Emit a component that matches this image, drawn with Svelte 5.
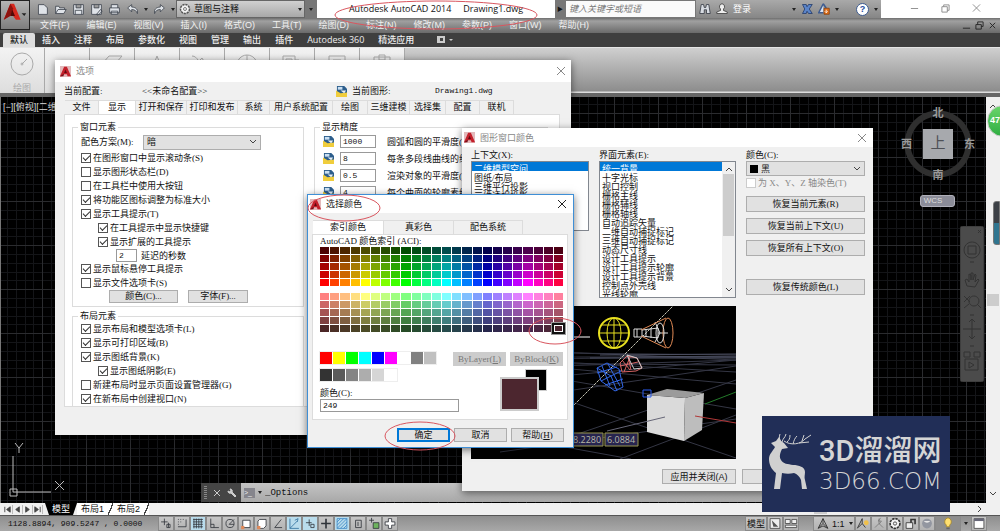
<script>
	const menus = ['文件(F)', '编辑(E)', '视图(V)', '插入(I)', '格式(O)', '工具(T)', '绘图(D)', '标注(N)', '修改(M)', '参数(P)', '窗口(W)', '帮助(H)'];
	const ribbonTabs = ['默认', '插入', '注释', '布局', '参数化', '视图', '管理', '输出', '插件', 'Autodesk 360', '精选应用'];

	// ribbon panels, 24x24 glyphs
	const panels = [
		'',
		'M2 12l7-8h13l-7 8zM2 16h13l7-8M2 20h13l7-8',
		'M5 22L12 4l7 18M8 16h8',
		'M2 4c6 0 6 8 12 8s6-4 9-2M4 14l8-8 6 10',
		'M12 3a10 10 0 1 0 .1 0M12 3v20M2 13h20',
		'M3 4h12v14H3zM6 7h6v8H6zM15 8h4v8',
		'M4 4h16v18H4zM8 8h8v10H8zM4 12h16',
		'M4 5h16v18H4zM9 3h6v5H9z'
	];

	// quick access toolbar, 16x16 glyphs
	const quick = [
		'M3 2h7l4 4v8H3z',
		'M2 13V4h4l1 2h6v2M2 13l3-5h10l-3 5z',
		'M2 2h12v12H2zM5 2v4h6V2M4 14V9h8v5',
		'M2 2h12v12H2zM5 2v4h6V2M8 14l5-6 2 2-5 5z',
		'M4 6V2h8v4M2 6h12v6H2zM4 10h8v4H4z',
		'M2 6l5-4v3c5 0 8 3 7 8-1-3-3-5-7-5v3z',
		'M14 6L9 2v3c-5 0-8 3-7 8 1-3 3-5 7-5v3z'
	];

	const tabs = ['文件', '显示', '打开和保存', '打印和发布', '系统', '用户系统配置', '绘图', '三维建模', '选择集', '配置', '联机'];

	const windowItems = [
		{ text: '在图形窗口中显示滚动条(S)', on: true },
		{ text: '显示图形状态栏(D)', on: false },
		{ text: '在工具栏中使用大按钮', on: false },
		{ text: '将功能区图标调整为标准大小', on: true },
		{ text: '显示工具提示(T)', on: true },
		{ text: '在工具提示中显示快捷键', on: true, sub: true },
		{ text: '显示扩展的工具提示', on: true, sub: true }
	];
	const windowItems2 = [
		{ text: '显示鼠标悬停工具提示', on: true },
		{ text: '显示文件选项卡(S)', on: false }
	];
	const layoutItems = [
		{ text: '显示布局和模型选项卡(L)', on: true },
		{ text: '显示可打印区域(B)', on: true },
		{ text: '显示图纸背景(K)', on: true },
		{ text: '显示图纸阴影(E)', on: true, sub: true },
		{ text: '新建布局时显示页面设置管理器(G)', on: false },
		{ text: '在新布局中创建视口(N)', on: true }
	];
	const precision = [
		['1000', '圆弧和圆的平滑度(A)'],
		['8', '每条多段线曲线的线段数(V)'],
		['0.5', '渲染对象的平滑度(J)'],
		['4', '每个曲面的轮廓素线(O)']
	];

	const contexts = ['二维模型空间', '图纸/布局', '三维平行投影', '三维透视投影'];
	const elements = ['统一背景', '十字光标', '视口控制', '栅格主线', '栅格辅线', '栅格轴线', '自动追踪矢量', '二维自动捕捉标记', '三维自动捕捉标记', '动态尺寸线', '设计工具提示', '设计工具提示轮廓', '设计工具提示背景', '控制点外壳线', '光线轮廓'];
	const restore = ['恢复当前元素(R)', '恢复当前上下文(U)', '恢复所有上下文(O)', '恢复传统颜色(L)'];

	// ACI palette: 24 hues in steps of 15 degrees, five levels each
	const levels = [76, 127, 165, 204, 255];

	function aci(hue, level, pale) {
		const channel = (shift) => {
			const k = (shift + hue / 60) % 6;
			const v = Math.max(0, Math.min(k, 4 - k, 1));
			return Math.round(level * (1 - v * (pale ? 0.5 : 1)));
		};
		return `rgb(${channel(5)}, ${channel(3)}, ${channel(1)})`;
	}

	function palette(list, pale) {
		return list.flatMap((level) => Array.from({ length: 24 }, (_, i) => aci(i * 15, level, pale)));
	}

	const strong = palette(levels, false);
	const soft = palette([...levels].reverse(), true);
	const basic = ['#f00', '#ff0', '#0f0', '#0ff', '#00f', '#f0f', '#fff', '#808080', '#c0c0c0'];
	const grays = ['#333', '#5b5b5b', '#848484', '#adadad', '#d6d6d6', '#fff'];

	// status bar toggles
	const toggles = [
		{ d: 'M2 6h8M6 2v8M9 9h4v4H9zM11 7v6' },
		{ d: 'M3 3h1M6 3h1M9 3h1M3 6h1M6 6h1M3 9h1M3 12h10V3' },
		{ d: 'M2 3h12M2 6h12M2 9h12M2 12h12M3 2v12M6 2v12M9 2v12M12 2v12', on: true },
		{ d: 'M4 2v11h10M4 9h4v4' },
		{ d: 'M3 8a5 5 0 1 0 10 0 5 5 0 1 0-10 0M7 9l6-6M7 9h6' },
		{ d: 'M4 4h9v9H4z', fill: '#fff', dot: true },
		{ d: 'M5 3h8v8l-3 3H3V5z', fill: '#fff', dot: true },
		{ d: 'M12 3L4 13h9' },
		{ d: 'M3 2v12h11M3 14L12 5M9 4l4-2-1 4', on: true, stroke: '#2f6f9c' },
		{ d: 'M3 7h7M7 3v8M9 9h4v4H9z', on: true },
		{ d: 'M8 2v12M2 8h12', wide: true },
		{ d: 'M2 2h12v12H2zM2 6l4-4M2 10l8-8M2 14L14 2M6 14l8-8M10 14l4-4', on: true, stroke: '#3b86c4' },
		{ d: 'M5 4h7v9H5zM8 6v5' },
		{ d: 'M2 4h6M5 1v6M7 7h7v7H7z', fill: '#6db35e' },
		{ d: 'M6 2h4v4h4v4h-4v4H6v-4H2V6h4z', fill: '#fff' }
	];
</script>

{#snippet acad()}
	<svg class="acad" viewBox="0 0 16 16" aria-hidden="true">
		<path d="M0 0h16v16H0z" fill="#e3b9bb" />
		<path d="M6 1h4l6 14h-5l-1-3H5l-2 3H0z" fill="#c3202b" />
		<path d="M8 5l2 5H6z" fill="#5d0a10" />
		<path d="M0 15l6-4-1 4z" fill="#74101a" />
	</svg>
{/snippet}

{#snippet dwg()}
	<svg class="dwg" viewBox="0 0 12 12" aria-hidden="true">
		<path d="M1 0h8l3 3v8H1z" fill="#2d5e8c" />
		<path d="M2 1h5v3H2z" fill="#c9dff2" />
		<path d="M0 5l5 3 7-1v5H0z" fill="#f0cd3c" />
		<path d="M5 5h6l-2 3z" fill="#e9f0f5" />
	</svg>
{/snippet}

{#snippet closeIcon()}
	<svg class="x" viewBox="0 0 10 10" aria-hidden="true"><path d="M1 1l8 8M9 1L1 9" /></svg>
{/snippet}

{#snippet chevron()}
	<svg class="chevron" viewBox="0 0 10 10" aria-hidden="true"><path d="M2 3l3 3 3-3" /></svg>
{/snippet}

{#snippet check(item)}
	<label class="check" class:sub={item.sub}><input type="checkbox" checked={item.on} />{item.text}</label>
{/snippet}

<div class="app">
	<header>
		<button class="logo" aria-label="AutoCAD">
			<svg viewBox="0 0 30 30" aria-hidden="true">
				<path d="M10 3h4l7 17h-5l-3-4h-4l-6 4z" fill="#d5281e" />
				<path d="M10 3L3 20l7-4 3-8z" fill="#8d120e" />
				<path d="M12 9l3 7h-5z" fill="#500a08" />
				<path d="M22 13h5l-2 3z" fill="#222" />
			</svg>
		</button>
		<div class="bars">
			<div class="titlebar">
				<div class="quick">
					{#each quick as d, i}
						<button aria-label="快速访问 {i + 1}"><svg viewBox="0 0 16 16"><path {d} fill="#dfe3e8" stroke="#3c434c" /></svg></button>
						{#if i > 4}<i class="caret"></i>{/if}
					{/each}
				</div>
				<button class="workspace">
					<svg viewBox="0 0 16 16" aria-hidden="true"><circle cx="8" cy="8" r="6" fill="#f4f4f4" stroke="#555" stroke-dasharray="3 1" stroke-width="2" /><circle cx="8" cy="8" r="2" fill="none" stroke="#555" /></svg>
					草图与注释<i class="caret"></i>
				</button>
				<button class="more" aria-label="更多"><i class="caret"></i></button>
				<h1><span>Autodesk AutoCAD 2014</span><span>Drawing1.dwg</span></h1>
				<button class="expand" aria-label="展开">▶</button>
				<input class="search" placeholder="键入关键字或短语" aria-label="搜索" />
				<div class="info">
					<svg viewBox="0 0 16 16"><path d="M3 2h3l1 4h2l1-4h3l2 12h-5V9H7v5H1z" fill="#d8dce2" stroke="#2c323c" /></svg>
					<svg viewBox="0 0 16 16"><path d="M8 1a4 4 0 0 1 2 7v2l5 2v2H1v-2l5-2V8a4 4 0 0 1 2-7z" fill="#eee" stroke="#333" /></svg>
					<button class="login">登录</button>
					<i class="caret"></i>
					<svg viewBox="0 0 16 16"><path d="M2 2h5l1 3 2-3h5l-4 6 4 6h-5l-2-3-1 3H2l3-6z" fill="#5b84c8" stroke="#1d3566" /></svg>
					<svg viewBox="0 0 16 16"><path d="M7 1l-6 12h6M7 1l4 6" fill="#d7e4f7" stroke="#3f5d91" stroke-width="2" /><path d="M8 7h7v8H8z" fill="#e0701c" stroke="#873c08" /><path d="M11 9v4M9 11l2 2 2-2" stroke="#fff" fill="none" /></svg>
					<i class="caret"></i>
					<button class="help" aria-label="帮助">?</button>
					<i class="caret"></i>
				</div>
				<div class="sys">
					<button aria-label="最小化"><svg viewBox="0 0 10 10"><path d="M1 5h8" /></svg></button>
					<button aria-label="还原"><svg viewBox="0 0 10 10"><path d="M1 3h6v6H1zM3 3V1h6v6H7" /></svg></button>
					<button aria-label="关闭">{@render closeIcon()}</button>
				</div>
			</div>
			<nav class="menubar">
				{#each menus as item}<a href="#menu">{item}</a>{/each}
				<div class="docsys">
					<svg viewBox="0 0 10 10"><path d="M1 8h8" /></svg>
					<svg viewBox="0 0 10 10"><path d="M1 4h6v5H1zM3 4V1h6v5H7" /></svg>
					<svg viewBox="0 0 10 10"><path d="M2 2l6 6M8 2L2 8" /></svg>
				</div>
			</nav>
		</div>
	</header>

	<nav class="ribbon-tabs">
		{#each ribbonTabs as tab, i}<a href="#tab" class:active={i === 0}>{tab}</a>{/each}
		<svg viewBox="0 0 18 8" aria-hidden="true"><path d="M1 0h8v7H1z" fill="#ccc" /><path d="M4 2h3v3H4z" fill="#444" /><path d="M13 3h4l-2 2z" fill="#ccc" /></svg>
	</nav>

	<section class="ribbon">
		<div class="panel">
			<svg viewBox="0 0 24 24"><circle cx="12" cy="12" r="11" /><path d="M12 12l5-5" /><circle cx="12" cy="12" r="1" /></svg>
			<span>绘图</span>
		</div>
		{#each panels as d}
			<div class="panel"><svg viewBox="0 0 24 24"><path {d} /></svg></div>
		{/each}
	</section>

	<main>
		<div class="canvas">
			<p class="viewport">[−][俯视][二维线框]</p>

			<svg class="ucs" viewBox="0 0 64 60" aria-hidden="true">
				<path d="M10 16v36h38M7 49h7v7H7z" />
				<path d="M12 3l4 5 4-5M16 8v5M52 41l9 9M61 41l-9 9" />
			</svg>

			<div class="cube">
				<span class="n">北</span><span class="w">西</span><b>上</b><span class="e">东</span><span class="s">南</span>
			</div>
			<button class="wcs">WCS</button>
			<svg class="navbar" viewBox="0 0 24 156" aria-hidden="true">
				<rect width="24" height="156" rx="3" fill="#4b4b4b" />
				<path d="M18 4l3 3M21 4l-3 3M12 16a8 8 0 1 0 .1 0M8 20h8v8H8zM10 36h4M7 60l-2-6 2-1 2 3v-8l2 1v5-7h2v7l2-6 1 1-1 7 3-3 1 1-4 7zM4 70l6 6M10 70l-6 6M14 70a5 5 0 1 1-.1 0M17 78l4 4M4 82l5-4M10 89h4M12 93v20M3 103h18M9 96l3-3 3 3M9 110l3 3 3-3M10 120h4M4 126h6v5H4zM14 126h6v5h-6zM5 133h13v11H5zM9 136l5 3-5 3z" />
			</svg>

			<div class="command">
				<div class="grip"><i></i>
					<svg viewBox="0 0 10 10"><path d="M2 2l6 6M8 2L2 8" /></svg>
					<svg viewBox="0 0 10 10"><path d="M1 3a2 2 0 0 0 3 2l4 4 1-1-4-4a2 2 0 0 0-2-3l1 2-1 1z" fill="#ccc" /></svg>
				</div>
				<label for="cmd">&gt;_</label><i class="caret"></i>
				<input id="cmd" value="_Options" />
			</div>
		</div>
		<div class="vscroll">
			<svg viewBox="0 0 10 10"><path d="M2 7l3-3 3 3" /></svg>
			<i></i>
			<svg viewBox="0 0 10 10"><path d="M2 3l3 3 3-3" /></svg>
		</div>
	</main>

	<div class="layouts">
		<div class="steps">
			{#each ['M2 2v6M8 2v6L4 5z', 'M7 2v6L3 5z', 'M3 2v6l4-3z', 'M8 2v6M2 2v6l4-3z'] as d}
				<svg viewBox="0 0 10 10"><path {d} fill="#444" stroke="#444" /></svg>
			{/each}
		</div>
		<a href="#model" class="active">模型</a><a href="#layout1">布局1</a><i class="slash"></i><a href="#layout2">布局2</a><i class="slash"></i>
		<div class="hscroll"><i></i><svg viewBox="0 0 10 10"><path d="M3 2l3 3-3 3" /></svg></div>
	</div>

	<footer>
		<output>1128.8894, 909.5247 , 0.0000</output>
		<div class="toggles">
			{#each toggles as t, i}
				<button class:on={t.on} aria-label="状态 {i + 1}">
					<svg viewBox="0 0 16 16">
						<path d={t.d} fill={t.fill ?? 'none'} stroke={t.stroke ?? '#30343a'} stroke-width={t.wide ? 2 : 1} />
						{#if t.dot}<path d="M2 11h4v4H2z" fill="#e08a5a" />{/if}
					</svg>
				</button>
			{/each}
		</div>
		<div class="right">
			<button class="model">模型</button>
			<button aria-label="快速查看布局"><svg viewBox="0 0 16 16"><path d="M2 2h12v12H2z" fill="#eee" stroke="#444" /><path d="M4 4l8 8H6z" fill="#555" /></svg></button>
			<button aria-label="快速查看图形"><svg viewBox="0 0 16 16"><path d="M1 3h6v5H1zM9 3h6v5H9zM1 10h14v3H1z" fill="#eee" stroke="#444" /></svg></button>
			<button class="scale"><svg viewBox="0 0 16 16"><path d="M8 2v6l5 5M8 8l-5 5M8 2L2 14M8 2l6 12M2 14l6-3 6 3" fill="none" stroke="#222" /></svg>1:1<i class="caret"></i></button>
			<button aria-label="注释可见性"><svg viewBox="0 0 16 16"><path d="M7 2v6l4 5M7 8l-5 5M7 2l-6 12" fill="none" stroke="#222" /><circle cx="12" cy="7" r="3" fill="#f0c04a" /></svg></button>
			<button aria-label="自动缩放"><svg viewBox="0 0 16 16"><path d="M8 2v6l5 5M8 8l-5 5M10 1l-3 4h4l-3 4" fill="none" stroke="#777" /></svg></button>
			<button aria-label="切换工作空间"><svg viewBox="0 0 16 16"><circle cx="8" cy="8" r="6" fill="#f4f4f4" stroke="#333" stroke-dasharray="3 1" stroke-width="2" /><circle cx="8" cy="8" r="2" fill="none" stroke="#333" /></svg></button>
			<button aria-label="锁定"><svg viewBox="0 0 16 16"><path d="M2 7h8v7H2z" fill="#eee" stroke="#333" /><path d="M8 7V3h5v6" fill="none" stroke="#333" stroke-width="2" /></svg></button>
			<button aria-label="硬件加速"><svg viewBox="0 0 16 16"><circle cx="8" cy="8" r="6" fill="#9296a0" /><path d="M4 5a5 5 0 0 0 8 0" fill="#e6e6e6" /></svg></button>
			<button class="bulb" aria-label="隔离对象"><svg viewBox="0 0 16 16"><path d="M8 1a5 5 0 0 1 2 9v2H6v-2a5 5 0 0 1 2-9z" fill="#ffe070" stroke="#a98728" /><path d="M6 13h4v2H6z" fill="#666" /></svg></button>
			<i class="caret"></i>
			<button aria-label="全屏显示"><svg viewBox="0 0 16 16"><path d="M2 2h12v12H2z" fill="#fff" stroke="#444" /><path d="M2 2h12v3H2z" fill="#667" /></svg></button>
		</div>
	</footer>

	<section class="window options" aria-label="选项">
		<div class="caption">{@render acad()}<h2>选项</h2><button aria-label="关闭">{@render closeIcon()}</button></div>
		<div class="profile">
			<span>当前配置:</span><span>&lt;&lt;未命名配置&gt;&gt;</span>
			{@render dwg()}
			<span>当前图形:</span><span class="mono">Drawing1.dwg</span>
		</div>
		<div class="tabs">
			{#each tabs as tab, i}<button class:active={i === 1}>{tab}</button>{/each}
		</div>
		<div class="page">
			<div class="column">
				<fieldset>
					<legend>窗口元素</legend>
					<div class="scheme">
						<label for="scheme">配色方案(M):</label>
						<div class="combo"><select id="scheme"><option>暗</option></select>{@render chevron()}</div>
					</div>
					{#each windowItems as item}{@render check(item)}{/each}
					<div class="delay"><input id="delay" class="mono" value="2" /><label for="delay">延迟的秒数</label></div>
					{#each windowItems2 as item}{@render check(item)}{/each}
					<div class="pair"><button class="btn">颜色(C)...</button><button class="btn">字体(F)...</button></div>
				</fieldset>
				<fieldset class="second">
					<legend>布局元素</legend>
					{#each layoutItems as item}{@render check(item)}{/each}
				</fieldset>
			</div>
			<fieldset class="precision">
				<legend>显示精度</legend>
				{#each precision as [value, text], i}
					<div>{@render dwg()}<input id="precision{i}" class="mono" {value} /><label for="precision{i}">{text}</label></div>
				{/each}
			</fieldset>
		</div>
	</section>

	<section class="window colors" aria-label="图形窗口颜色">
		<div class="caption">{@render acad()}<h2>图形窗口颜色</h2><button aria-label="关闭">{@render closeIcon()}</button></div>
		<div class="lists">
			<div>
				<label for="context">上下文(X):</label>
				<div class="list short"><select id="context" size="7">
					{#each contexts as c, i}<option selected={i === 0}>{c}</option>{/each}
				</select></div>
			</div>
			<div>
				<label for="element">界面元素(E):</label>
				<div class="list">
					<select id="element" size="15">
						{#each elements as e, i}<option selected={i === 0}>{e}</option>{/each}
					</select>
					<div class="bar">
						<svg viewBox="0 0 10 10"><path d="M2 7l3-3 3 3" /></svg>
						<i></i>
						<svg viewBox="0 0 10 10"><path d="M2 3l3 3 3-3" /></svg>
					</div>
				</div>
			</div>
			<div class="side">
				<label for="color">颜色(C):</label>
				<div class="combo"><i></i><select id="color"><option>黑</option></select>{@render chevron()}</div>
				<label class="check off"><input type="checkbox" disabled />为 X、Y、Z 轴染色(T)</label>
				{#each restore as text}<button class="btn">{text}</button>{/each}
			</div>
		</div>
		<svg class="preview" viewBox="471 306 265 153">
			<path d="M471 306h265v153H471z" fill="#000" />
			<g stroke="#343644" fill="none">
				<path d="M471 357h265M471 360l265-4M471 363l265 2M471 369l265-9M560 362l176 10M560 376l176-16M560 368l176 16M560 392l176-26M560 379l176 30M560 352l176 8M471 352l265 3M560 398l176 60M560 440l176-60M500 452l236-33M620 459l116-44M471 430l160 29" />
				<path d="M600 355l136-1M620 356l116 1M590 358l146 0" stroke="#4b4e60" />
			</g>
			<path d="M574 405l99-99" stroke="#c8c8b8" stroke-dasharray="3 1" />
			<path d="M574 337h16" stroke="#fff" />
			<g stroke="#e8e020" fill="none">
				<circle cx="614" cy="333" r="15" stroke-width="2" /><ellipse cx="614" cy="333" rx="7" ry="15" /><path d="M614 318v30M599 333h30M602 325h24M602 341h24" />
			</g>
			<g fill="none" stroke="#ddd">
				<path d="M634 329h8v8h-8zM637 329v8M642 330l16-2v10l-16-2M646 329v8M651 328v10M655 322l5 11-5 9M658 333h10" />
				<path d="M641 330l25-12M641 336l25 12" stroke="#e08a55" />
				<ellipse cx="668" cy="333" rx="5" ry="15" stroke="#e08a55" />
				<ellipse cx="660" cy="333" rx="4" ry="10" />
			</g>
			<path d="M620 363l7-7 10 2 5 10-6 3-14 1zM622 360l8 10M628 356l3 14M620 366l18-4M624 372l6-15" fill="none" stroke="#d76464" />
			<path d="M627 355l10 3 5 10-8 1z" fill="none" stroke="#ccc" />
			<path d="M597 368l10-5 12 6 4 18-8 4-14-10zM597 373l20-6M602 366l8 20M608 364l12 22M601 381l20-10M605 385l18-6M597 368l14 8 6 15" fill="none" stroke="#3267e6" />
			<path d="M705 404l31-12" stroke="#237a2a" />
			<path d="M647 395l38 3-1 43-37-9z" fill="#dadada" />
			<path d="M685 398l19-5-2 37-18 11z" fill="#bdbdbd" />
			<path d="M647 395l20-6 37 4-19 5z" fill="#9b9b9b" />
			<path d="M643 390h8v7h-8z" fill="none" stroke="#2a5df0" />
			<path d="M607 431l58-14" stroke="#667" /><path d="M695 416l41 7" stroke="#b03838" />
			<g fill="#27254f" stroke="#989650"><path d="M569 433h34v13h-34zM605 433h33v13h-33z" /></g>
			<text x="573" y="443">8.2280</text><text x="607" y="443">6.0884</text>
		</svg>
		<div class="actions"><button class="btn">应用并关闭(A)</button><button class="btn">取消</button></div>
	</section>

	<section class="window picker" aria-label="选择颜色">
		<div class="caption">{@render acad()}<h2>选择颜色</h2><button aria-label="关闭">{@render closeIcon()}</button></div>
		<div class="tabs">
			<button class="active">索引颜色</button><button>真彩色</button><button>配色系统</button>
		</div>
		<div class="page">
			<p>AutoCAD 颜色索引 (ACI):</p>
			<div class="palette">{#each strong as c}<i style="background: {c}"></i>{/each}</div>
			<div class="palette">{#each soft as c, i}<i class:picked={i === soft.length - 1} style="background: {c}"></i>{/each}</div>
			<div class="lower">
				<div class="basics">
					<div>{#each basic as c}<i style="background: {c}"></i>{/each}</div>
					<div>{#each grays as c}<i style="background: {c}"></i>{/each}</div>
				</div>
				<div class="by"><button class="btn" disabled>ByLayer(<u>L</u>)</button><button class="btn" disabled>ByBlock(<u>K</u>)</button></div>
			</div>
			<div class="value">
				<div><label for="index">颜色(C):</label><input id="index" class="mono" value="249" /></div>
				<div class="compare"><i></i><i></i></div>
			</div>
		</div>
		<div class="actions"><button class="btn primary">确定</button><button class="btn">取消</button><button class="btn">帮助(<u>H</u>)</button></div>
	</section>

	<div class="handle"></div>
	<div class="ball">47</div>

	<div class="brand">
		<svg viewBox="0 0 44 58" aria-hidden="true">
			<path d="M3 10l5-2 3-4 2 4 3 2 4 5-6 1c-2 4-3 8-1 11 2 4 7 4 12 5 6 0 12 2 12 7 0 3-1 5 0 8l2 9h-5l-1-9c-1-3-4-6-7-7-4 1-8 1-12 0l-2 16H6l2-16C3 36 1 31 1 26c0-5 4-8 6-12z" stroke="none" />
			<path d="M13 9C11 6 11 4 12 1M14 9c1-4 3-4 4-8M16 8c7 5 17 3 21-2l6-4M19 9c2-2 3-3 3-7M25 11c1-4 2-6 4-8M31 10l10-1M34 8l2-6" fill="none" />
		</svg>
		<div><strong>3D溜溜网</strong><span>3D66.COM</span></div>
	</div>

	<svg class="marks" viewBox="0 0 1000 531" aria-hidden="true">
		<ellipse cx="436" cy="15" rx="101" ry="14" />
		<ellipse cx="344" cy="208" rx="36" ry="13" />
		<ellipse cx="555" cy="331" rx="26" ry="13" />
		<ellipse cx="420" cy="436" rx="35" ry="14" />
	</svg>
</div>

<style>
	:global(body) {
		background: #000;
	}

	.app {
		position: relative;
		display: flex;
		flex-direction: column;
		min-height: 100vh;
		overflow: hidden;
		font-family: "Liberation Sans", "Noto Sans CJK SC", sans-serif;
		font-size: 9px;
		line-height: 12px;
		color: #111;
		white-space: nowrap;
	}

	.app * {
		box-sizing: border-box;
	}

	button, input, select {
		margin: 0;
		padding: 0;
		border: 0;
		border-radius: 0;
		outline: 0;
		background: none;
		font: inherit;
		color: inherit;
	}

	a {
		color: inherit;
		text-decoration: none;
	}

	h1, h2, p {
		margin: 0;
		font-size: 9px;
		font-weight: normal;
	}

	svg {
		display: block;
		flex: none;
	}

	.caret {
		flex: none;
		border: 2px solid transparent;
		border-top: 3px solid #222;
		border-bottom: 0;
	}

	/* application frame */
	header {
		display: flex;
		background: linear-gradient(#999, #555);
	}

	.logo {
		width: 30px;
		height: 30px;
		border: 1px solid #222;
		background: linear-gradient(#b5b5b5, #7d7d7d);
	}

	.bars {
		flex: 1;
		min-width: 0;
	}

	.titlebar {
		display: flex;
		height: 18px;
		background: #fff;
	}

	.quick, .info {
		display: flex;
		align-items: center;
		background: linear-gradient(#a9a9a9, #868686);
	}

	.quick {
		gap: 5px;
		width: 146px;
		padding-left: 6px;
	}

	.quick svg {
		width: 13px;
		height: 13px;
	}

	.info svg {
		width: 12px;
		height: 12px;
	}

	.workspace {
		display: flex;
		align-items: center;
		gap: 3px;
		width: 129px;
		padding: 0 2px;
		border: 1px solid #666;
		background: linear-gradient(#d0d0d0, #a8a8a8);
	}

	.workspace svg {
		width: 12px;
	}

	.workspace .caret {
		margin-left: auto;
	}

	.more {
		display: flex;
		align-items: center;
		justify-content: center;
		width: 12px;
		background: #777;
	}

	h1 {
		display: flex;
		flex: 1;
		gap: 12px;
		justify-content: center;
		font-family: "Open Sans", sans-serif;
		line-height: 18px;
	}

	.expand {
		width: 10px;
		background: #777;
		font-size: 6px;
	}

	.search {
		width: 131px;
		padding-left: 3px;
		border: 1px solid #777;
		background: #fafafa;
	}

	.search::placeholder {
		color: #777;
		font-style: italic;
	}

	.info {
		gap: 5px;
		width: 185px;
		padding: 0 3px;
	}

	.login {
		margin-right: auto;
		color: #fff;
	}

	.help {
		width: 13px;
		height: 13px;
		margin-left: 12px;
		border: 1px solid #3d5b8f;
		border-radius: 50%;
		background: #fff;
		color: #1f4da0;
		font-weight: bold;
		line-height: 10px;
	}

	.sys {
		display: flex;
		justify-content: space-around;
		width: 119px;
		padding: 0 8px 2px 18px;
	}

	.sys svg, .docsys svg {
		width: 9px;
		fill: none;
		stroke: #888;
	}

	.menubar {
		display: flex;
		gap: 17px;
		height: 15px;
		padding-left: 10px;
		background: linear-gradient(#6e6e6e, #a0a0a0 20%, #6a6a6a);
		color: #f0f0f0;
		line-height: 15px;
	}

	.docsys {
		display: flex;
		gap: 4px;
		align-items: center;
		margin-left: auto;
		padding-right: 3px;
	}

	.docsys svg {
		stroke: #222;
	}

	.ribbon-tabs {
		display: flex;
		align-items: center;
		gap: 14px;
		height: 14px;
		padding-left: 3px;
		background: #3f3f3f;
		color: #eee;
		font-family: "Open Sans", "Noto Sans CJK SC", sans-serif;
		font-weight: 500;
	}

	.ribbon-tabs a.active {
		margin-right: -7px;
		padding: 1px 7px;
		border-radius: 2px 2px 0 0;
		background: #dedede;
		color: #222;
	}

	.ribbon-tabs svg {
		width: 18px;
		margin-left: 8px;
	}

	.ribbon {
		display: flex;
		height: 50px;
		border-top: 1px solid #e5e5e5;
		border-bottom: 4px solid #666;
		background: linear-gradient(#cfcfcf, #8d8d8d 43px, #ddd 44px);
	}

	.panel {
		display: flex;
		flex-direction: column;
		align-items: center;
		gap: 6px;
		width: 45px;
		padding-top: 4px;
		border-right: 1px solid #aaa;
		background: linear-gradient(#f3f3f3, #ddd);
		color: #aaa;
	}

	.panel svg {
		width: 24px;
		height: 24px;
		fill: none;
		stroke: #aaa;
	}

	main {
		display: flex;
		flex: 1;
	}

	.canvas {
		position: relative;
		flex: 1;
		border-left: 1px solid #777;
		background-color: #000;
		background-image:
			linear-gradient(90deg, #2b2c2f 1px, #0000 1px),
			linear-gradient(#2b2c2f 1px, #0000 1px),
			linear-gradient(90deg, #0000 9px, #141518 9px 10px, #0000 10px 18px, #141518 18px 19px, #0000 19px 27px, #141518 27px 28px, #0000 28px 35px, #141518 35px 36px, #0000 36px),
			linear-gradient(#0000 9px, #141518 9px 10px, #0000 10px 18px, #141518 18px 19px, #0000 19px 27px, #141518 27px 28px, #0000 28px 35px, #141518 35px 36px, #0000 36px);
		background-size: 44px 44px;
		background-position: 41px 16px;
	}

	.viewport {
		padding: 4px 2px;
		color: #ddd;
	}

	.ucs {
		position: absolute;
		left: 2px;
		bottom: 3px;
		width: 64px;
		height: 60px;
		fill: none;
		stroke: #bbb;
	}

	.cube {
		position: absolute;
		top: 10px;
		right: 8px;
		display: grid;
		grid-template: 22px 30px 22px / 22px 30px 22px;
		place-items: center;
		width: 80px;
		height: 74px;
		justify-content: center;
		background: radial-gradient(circle, #0000 27px, #2f2f2f 28px 33px, #0000 34px);
		color: #999;
		font-size: 11px;
		font-weight: bold;
	}

	.cube .n, .cube .s {
		grid-column: 2;
	}

	.cube .n {
		align-self: start;
	}

	.cube .s {
		align-self: end;
	}

	.cube .w {
		grid-area: 2 / 1;
		justify-self: start;
	}

	.cube .e {
		grid-area: 2 / 3;
		justify-self: end;
	}

	.cube b {
		grid-area: 2 / 2;
		width: 30px;
		height: 30px;
		background: #a7a9ad;
		color: #4e5056;
		font-size: 15px;
		font-weight: normal;
		line-height: 28px;
		text-align: center;
	}

	.wcs {
		position: absolute;
		top: 98px;
		right: 31px;
		width: 35px;
		height: 12px;
		padding-right: 9px;
		border: 1px solid #b0b0ba;
		border-radius: 3px;
		background: #8b8c98;
		color: #ddd;
		font-size: 8px;
		line-height: 10px;
	}

	.navbar {
		position: absolute;
		top: 129px;
		right: 2px;
		width: 24px;
		fill: none;
		stroke: #333;
	}

	.command {
		position: absolute;
		left: 200px;
		right: 200px;
		bottom: 1px;
		display: flex;
		align-items: center;
		gap: 3px;
		height: 19px;
		background: linear-gradient(#c4c4c4, #a8a8a8);
	}

	.grip {
		display: flex;
		align-items: center;
		gap: 5px;
		width: 40px;
		height: 19px;
		padding: 0 3px;
		background: #454545;
	}

	.grip i {
		width: 3px;
		height: 14px;
		background: repeating-linear-gradient(#888 0 1px, #444 1px 2px);
	}

	.grip svg {
		width: 10px;
		fill: none;
		stroke: #ccc;
	}

	.command label {
		width: 11px;
		height: 10px;
		background: #85858c;
		color: #eee;
		font-size: 7px;
		line-height: 10px;
	}

	.command input {
		flex: 1;
		font-family: "Liberation Mono", monospace;
	}

	.vscroll {
		display: flex;
		flex-direction: column;
		justify-content: space-between;
		align-items: center;
		width: 14px;
		padding: 4px 0;
		background: #f0f0f0;
	}

	.vscroll svg, .hscroll svg, .bar svg, .chevron {
		width: 10px;
		height: 10px;
		fill: none;
		stroke: #444;
	}

	.vscroll i {
		width: 12px;
		height: 12px;
		background: #cdcdcd;
	}

	.layouts {
		display: flex;
		height: 12px;
		padding-left: 3px;
		background: #f0f0f0;
	}

	.steps {
		display: flex;
		align-items: center;
	}

	.steps svg {
		width: 10px;
		border-right: 1px solid #bbb;
	}

	.layouts a {
		padding: 0 4px;
		background: #fff;
	}

	.layouts a.active {
		margin-left: 2px;
		padding: 0 7px;
		background: #000;
		color: #fff;
		clip-path: polygon(0 0, 100% 0, calc(100% - 4px) 100%, 4px 100%);
	}

	.slash {
		width: 5px;
		background: linear-gradient(114deg, #fff 44%, #444 44% 58%, #fff 58%);
	}

	.hscroll {
		display: flex;
		flex: 1;
		align-items: center;
		justify-content: flex-end;
		gap: 148px;
		padding-right: 15px;
	}

	.hscroll i {
		width: 13px;
		height: 10px;
		background: #cdcdcd;
	}

	footer {
		display: flex;
		align-items: center;
		height: 16px;
		border-top: 1px solid #555;
		background: linear-gradient(#8e8e8e, #a8a8a8);
	}

	output {
		width: 158px;
		padding-left: 8px;
		font-family: "Liberation Mono", monospace;
		font-size: 8px;
	}

	.toggles, .right {
		display: flex;
		align-items: center;
	}

	.toggles button, .right button {
		min-width: 16px;
		height: 15px;
		border: 1px solid #8a8a8a;
		background: linear-gradient(#c6c6c6, #b2b2b2);
	}

	.toggles .on {
		background: #b9dcec;
	}

	footer svg {
		width: 14px;
		height: 13px;
	}

	.right {
		margin-left: auto;
		padding-right: 13px;
	}

	.right .model {
		width: 22px;
	}

	.right .scale {
		display: flex;
		align-items: center;
		gap: 2px;
		width: 42px;
		margin-left: 14px;
		padding-left: 2px;
	}

	.right .caret {
		margin: 0 3px;
	}

	.right .scale .caret {
		margin: 0 0 0 2px;
	}

	.right .bulb {
		width: 26px;
		padding-left: 5px;
		background: #8e8e8e;
	}

	/* dialogs */
	.window {
		position: absolute;
		background: #f0f0f0;
		box-shadow: 0 2px 8px #0008;
		font-family: "Liberation Serif", "Noto Sans CJK SC", serif;
	}

	.caption {
		display: flex;
		align-items: center;
		gap: 5px;
		padding: 0 5px;
		background: #fff;
		color: #888;
	}

	.caption h2 {
		flex: 1;
	}

	.acad {
		width: 11px;
		height: 11px;
	}

	.dwg {
		width: 11px;
		height: 11px;
	}

	.x {
		width: 10px;
		height: 10px;
		fill: none;
		stroke: #888;
	}

	.mono {
		font-family: "Liberation Mono", monospace;
		font-size: 8px;
	}

	.btn {
		height: 15px;
		border: 1px solid #adadad;
		background: #e1e1e1;
		line-height: 12px;
	}

	.btn:disabled {
		border-color: #ccc;
		background: #ccc;
		color: #777;
	}

	.tabs button {
		height: 14px;
		border: 1px solid #dcdcdc;
		border-width: 1px 1px 0 0;
		background: #f0f0f0;
		line-height: 13px;
	}

	.tabs .active {
		background: #fff;
	}

	.page {
		border: 1px solid #dcdcdc;
		background: #fff;
	}

	fieldset {
		min-width: 0;
		margin: 0;
		padding: 0 8px;
		border: 1px solid #dcdcdc;
	}

	legend {
		margin-left: -3px;
		padding: 0 2px;
	}

	.combo {
		display: flex;
		align-items: center;
		height: 15px;
		padding: 0 2px 0 3px;
		border: 1px solid #adadad;
		background: #e1e1e1;
	}

	.combo select {
		flex: 1;
		appearance: none;
		padding-left: 3px;
	}

	input.mono {
		height: 13px;
		padding-left: 2px;
		border: 1px solid #999;
		background: #fff;
	}

	.check {
		display: flex;
		align-items: center;
		gap: 2px;
		height: 14px;
	}

	.check.sub {
		padding-left: 17px;
	}

	.check input {
		appearance: none;
		flex: none;
		display: grid;
		place-items: center;
		width: 10px;
		height: 10px;
		border: 1px solid #555;
		background: #fff;
	}

	.check input:checked::before {
		content: "";
		width: 6px;
		height: 3px;
		border: solid #333;
		border-width: 0 0 1px 1px;
		rotate: -45deg;
		translate: 0 -1px;
	}

	.check.off {
		color: #888;
	}

	.check.off input {
		border-color: #ccc;
	}

	.options {
		left: 55px;
		top: 60px;
		width: 516px;
		height: 375px;
	}

	.options .caption {
		height: 22px;
	}

	.profile {
		display: grid;
		grid-template-columns: 78px 194px 16px 83px 1fr;
		align-items: center;
		height: 18px;
		padding-left: 9px;
	}

	.options .tabs {
		display: grid;
		grid-template-columns: 34px 37px 51px 51px 32px 63px 35px 42px 36px 34px 34px;
		padding-left: 10px;
	}

	.options .page {
		display: grid;
		grid-template-columns: 232px 234px;
		gap: 10px;
		margin: 0 11px 0 9px;
		padding: 6px 7px;
		height: 293px;
	}

	.column {
		display: flex;
		flex-direction: column;
		gap: 3px;
	}

	.scheme {
		display: flex;
		align-items: center;
		height: 18px;
	}

	.scheme label {
		width: 62px;
	}

	.scheme .combo {
		width: 118px;
		padding-left: 0;
	}

	.delay {
		display: flex;
		align-items: center;
		gap: 4px;
		height: 13px;
		padding-left: 35px;
	}

	.delay input {
		width: 21px;
	}

	.pair {
		display: flex;
		gap: 10px;
		padding: 0 0 3px 28px;
	}

	.pair .btn {
		width: 69px;
		height: 13px;
		line-height: 11px;
	}

	.pair .btn + .btn {
		width: 60px;
	}

	.precision div {
		display: flex;
		align-items: center;
		height: 17px;
	}

	.precision input {
		width: 36px;
		margin: 0 11px 0 6px;
	}

	.colors {
		left: 462px;
		top: 128px;
		width: 411px;
		height: 363px;
	}

	.colors .caption {
		height: 19px;
		padding: 0 6px 0 2px;
	}

	.lists {
		display: grid;
		grid-template-columns: 118px 137px 1fr;
		gap: 10px;
		height: 152px;
		padding: 2px 8px 0 9px;
	}

	.lists > div {
		display: flex;
		flex-direction: column;
	}

	.list {
		display: flex;
		border: 1px solid #82878f;
		background: #fff;
	}

	.list select {
		flex: 1;
		overflow: hidden;
		height: 135px;
	}

	.list.short select {
		height: 68px;
	}

	.list option {
		height: 9px;
		min-height: 0;
		padding: 0 2px;
		line-height: 9px;
	}

	.list option:checked {
		background: linear-gradient(#0078d7, #0078d7);
		-webkit-text-fill-color: #fff;
	}

	.bar {
		display: flex;
		flex-direction: column;
		align-items: center;
		width: 13px;
		padding: 2px 0;
		background: #f0f0f0;
	}

	.bar i {
		width: 11px;
		height: 62px;
		margin-bottom: auto;
		background: #cdcdcd;
	}

	.side .combo i {
		width: 8px;
		height: 8px;
		background: #000;
	}

	.side .btn {
		height: 16px;
		margin-top: 6px;
	}

	.side .btn:last-child {
		margin-top: 23px;
	}

	.preview {
		width: 265px;
		height: 153px;
		margin: 7px 0 10px 9px;
	}

	.preview text {
		fill: #b9b9a8;
		font: 9px "Open Sans", sans-serif;
	}

	.actions {
		display: flex;
	}

	.colors .actions {
		gap: 6px;
		padding-left: 200px;
	}

	.colors .actions .btn {
		width: 74px;
		font-family: "Liberation Sans", "Noto Sans CJK SC", sans-serif;
	}

	.picker {
		left: 307px;
		top: 194px;
		width: 267px;
		height: 254px;
		border: 1px solid #3f8fd6;
	}

	.picker .caption {
		height: 18px;
		padding: 0 6px 0 2px;
		color: #222;
	}

	.picker .x {
		stroke: #222;
	}

	.picker .tabs {
		display: grid;
		grid-template-columns: 71px 70px 69px;
		padding: 7px 0 0 5px;
	}

	.picker .page {
		display: flex;
		flex-direction: column;
		height: 186px;
		margin: 0 5px 8px 4px;
		padding: 0 4px 0 7px;
	}

	.palette {
		display: grid;
		grid-template-columns: repeat(24, 1fr);
		grid-auto-rows: 7px;
		gap: 1px;
		margin: 0 0 7px;
	}

	.palette i {
		min-width: 0;
	}

	.palette .picked {
		outline: 2px solid #111;
		border: 1px solid #fff;
		box-shadow: 0 0 0 3px #999;
		z-index: 1;
	}

	.lower {
		display: flex;
		justify-content: space-between;
		margin-top: 13px;
	}

	.basics {
		display: grid;
		gap: 5px;
	}

	.basics div {
		display: flex;
		gap: 1px;
		width: max-content;
		outline: 1px solid #eee;
	}

	.basics i {
		width: 12px;
		height: 12px;
	}

	.by {
		display: flex;
		gap: 4px;
	}

	.by .btn {
		width: 53px;
		height: 14px;
	}

	.value {
		display: flex;
		justify-content: space-between;
		margin-top: 6px;
	}

	.value label, .value input {
		display: block;
	}

	.value input {
		width: 139px;
	}

	.compare {
		display: grid;
		grid-template: 8px 14px 20px / 25px 14px 8px;
		margin: -18px 16px 0 0;
	}

	.compare i {
		grid-area: 1 / 2 / 3 / 4;
		border: 1px solid #ccc;
		background: #000;
	}

	.compare i + i {
		grid-area: 2 / 1 / 4 / 3;
		border-width: 2px;
		background: #4c262f;
	}

	.picker .actions {
		gap: 4px;
		justify-content: flex-end;
		padding-right: 9px;
	}

	.picker .btn {
		line-height: 11px;
	}

	.picker .actions .btn {
		width: 53px;
		height: 14px;
	}

	.picker .actions .primary {
		border: 2px solid #0078d7;
		line-height: 9px;
	}

	/* floating things */
	.handle {
		position: absolute;
		right: 0;
		top: 201px;
		width: 7px;
		height: 44px;
		border: 1px solid #777;
		border-radius: 3px 0 0 3px;
		background: linear-gradient(#3c4046 50%, #2f7590 50%);
	}

	.ball {
		position: absolute;
		top: 105px;
		right: -19px;
		width: 32px;
		height: 32px;
		padding-left: 2px;
		border: 1px solid #ccc;
		border-radius: 50%;
		background: linear-gradient(#6bd56b, #2fae42);
		color: #fff;
		font-size: 9px;
		font-weight: bold;
		line-height: 28px;
	}

	.brand {
		position: absolute;
		right: 50px;
		bottom: 19px;
		display: flex;
		gap: 7px;
		width: 188px;
		height: 96px;
		padding: 17px 6px;
		background: #212e57;
		color: #d5d5d5;
	}

	.brand svg {
		width: 44px;
		height: 58px;
		fill: #d0d0d0;
		stroke: #d0d0d0;
	}

	.brand strong, .brand span {
		display: block;
	}

	.brand strong {
		font: 500 29px/36px "Roboto", "Noto Sans CJK SC", sans-serif;
	}

	.brand span {
		font: 200 23px/24px "DejaVu Sans Light", "DejaVu Sans", sans-serif;
	}

	.marks {
		position: absolute;
		left: 0;
		top: 0;
		width: 1000px;
		height: 531px;
		fill: none;
		stroke: #d9565f;
		pointer-events: none;
	}
</style>
